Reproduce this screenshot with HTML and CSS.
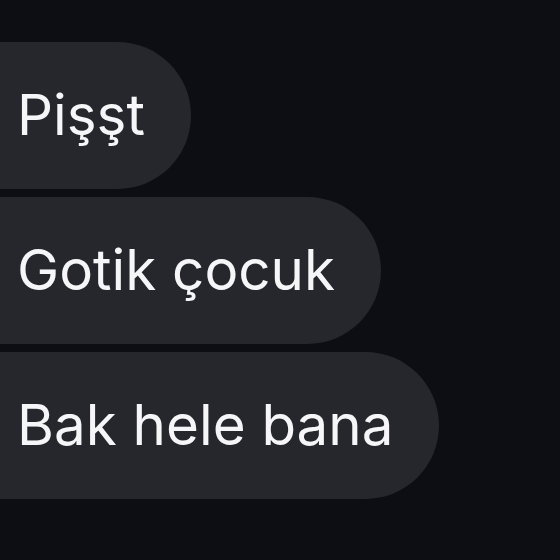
FILE: index.html
```html
<!DOCTYPE html>
<html lang="tr">
<head>
<meta charset="utf-8">
<link rel="stylesheet" href="styles.css">
</head>
<body>
<div class="thread">
  <div class="bubble">Pişşt</div>
  <div class="bubble">Gotik çocuk</div>
  <div class="bubble">Bak hele bana</div>
</div>
</body>
</html>
```
FILE: styles.css
```css
html, body {
  margin: 0;
  padding: 0;
  background: #0c0e13;
  width: 560px;
  height: 560px;
  overflow: hidden;
}
.thread {
  display: flex;
  flex-direction: column;
  align-items: flex-start;
  gap: 8px;
  padding-top: 42px;
}
.bubble {
  background: #25272d;
  color: #f6f6f8;
  font-family: Inter, "Noto Sans", sans-serif;
  font-size: 56.5px;
  line-height: 67px;
  padding: 39px 46px 41px 17px;
  border-radius: 0 74px 74px 0;
  white-space: nowrap;
}
```
